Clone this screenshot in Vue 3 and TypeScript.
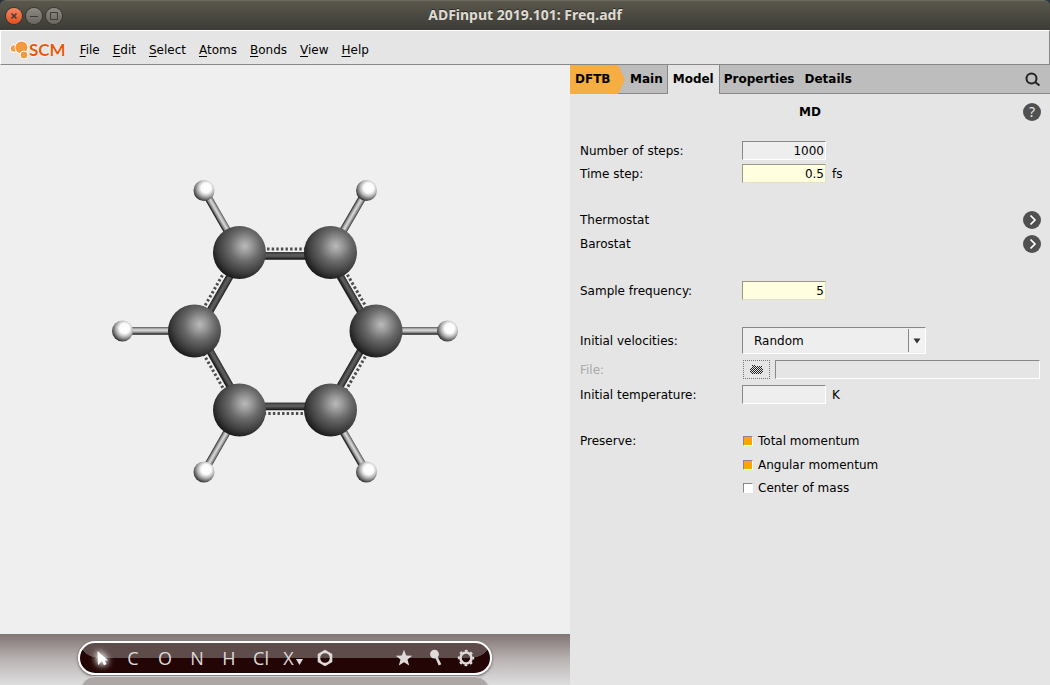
<script setup lang="ts">
import { ref } from 'vue'

interface Point { x: number; y: number }
interface Line { x1: number; y1: number; x2: number; y2: number }

const menus = ['File', 'Edit', 'Select', 'Atoms', 'Bonds', 'View', 'Help']
const elements = ['C', 'O', 'N', 'H', 'Cl']

const steps = ref('1000')
const timeStep = ref('0.5')
const sampleFrequency = ref('5')
const velocities = ref('Random')
const velocityFile = ref('')
const temperature = ref('')
const preserve = ref([
  { label: 'Total momentum', on: true },
  { label: 'Angular momentum', on: true },
  { label: 'Center of mass', on: false },
])

const centre: Point = { x: 285, y: 331 }
const carbons: Point[] = [
  { x: 239.5, y: 252.5 },
  { x: 330.5, y: 252.5 },
  { x: 376, y: 331 },
  { x: 330.5, y: 410 },
  { x: 239.5, y: 410 },
  { x: 194.5, y: 331 },
]
const hydrogens: Point[] = [
  { x: 204, y: 190.5 },
  { x: 366.5, y: 190.5 },
  { x: 447.5, y: 331 },
  { x: 366.5, y: 472 },
  { x: 204, y: 472 },
  { x: 122.5, y: 331 },
]

function shifted(a: Point, b: Point, amount: number): Line {
  const mx = (a.x + b.x) / 2 - centre.x
  const my = (a.y + b.y) / 2 - centre.y
  const length = Math.hypot(mx, my)
  const dx = (mx / length) * amount
  const dy = (my / length) * amount
  return { x1: a.x + dx, y1: a.y + dy, x2: b.x + dx, y2: b.y + dy }
}

const ring = carbons.map((a, i) => {
  const b = carbons[(i + 1) % carbons.length]
  return { solid: shifted(a, b, -3.5), dots: shifted(a, b, 3.5) }
})
const arms: Line[] = carbons.map((c, i) => ({ x1: c.x, y1: c.y, x2: hydrogens[i].x, y2: hydrogens[i].y }))
</script>

<template>
  <div class="window">
    <header class="titlebar">
      <div class="controls">
        <button class="control close" aria-label="Close">
          <svg viewBox="0 0 16 16"><path d="M5.500 5.500l5 5M10.500 5.500l-5 5" /></svg>
        </button>
        <button class="control" aria-label="Minimize">
          <svg viewBox="0 0 16 16"><path d="M4 8.500h8" /></svg>
        </button>
        <button class="control" aria-label="Maximize">
          <svg viewBox="0 0 16 16"><path d="M4.500 4.500h7v7h-7z" /></svg>
        </button>
      </div>
      <h1>ADFinput 2019.101: Freq.adf</h1>
    </header>

    <nav class="menubar">
      <a href="#" class="logo" aria-label="SCM">
        <svg class="bubbles" viewBox="0 0 19 20">
          <g stroke="#fff" stroke-width="1" fill="#f39a3f">
            <circle cx="4" cy="8.500" r="3.800" />
            <circle cx="11.500" cy="7.500" r="6.500" />
            <circle cx="14" cy="15" r="4" />
          </g>
        </svg>
        <span>SCM</span>
      </a>
      <button v-for="m in menus" :key="m" class="menu"><u>{{ m[0] }}</u>{{ m.slice(1) }}</button>
    </nav>

    <main class="content">
      <section class="viewer">
        <svg class="molecule" viewBox="0 65 570 569" role="img" aria-label="Benzene">
          <defs>
            <radialGradient id="carbon" cx="0.6" cy="0.38" r="0.66">
              <stop offset="0" stop-color="#bababa" />
              <stop offset="0.18" stop-color="#9c9c9c" />
              <stop offset="0.45" stop-color="#696969" />
              <stop offset="0.78" stop-color="#3c3c3c" />
              <stop offset="1" stop-color="#161616" />
            </radialGradient>
            <radialGradient id="hydrogen" cx="0.6" cy="0.38" r="0.66">
              <stop offset="0" stop-color="#fff" />
              <stop offset="0.36" stop-color="#fbfbfb" />
              <stop offset="0.6" stop-color="#b8b8b8" />
              <stop offset="0.82" stop-color="#6c6c6c" />
              <stop offset="1" stop-color="#262626" />
            </radialGradient>
          </defs>
          <g v-for="(b, i) in ring" :key="'r' + i">
            <line v-bind="b.dots" class="dots" />
            <line v-bind="b.solid" stroke="#1c1c1c" stroke-width="7.500" />
            <g transform="translate(0.500 -0.700)">
              <line v-bind="b.solid" stroke="#3e3e3e" stroke-width="6" />
              <line v-bind="b.solid" stroke="#5a5a5a" stroke-width="3" />
            </g>
          </g>
          <g v-for="(b, i) in arms" :key="'a' + i">
            <line v-bind="b" stroke="#262626" stroke-width="7.500" />
            <g transform="translate(0.500 -0.700)">
              <line v-bind="b" stroke="#717171" stroke-width="6.500" />
              <line v-bind="b" stroke="#a5a5a5" stroke-width="4.500" />
              <line v-bind="b" stroke="#d2d2d2" stroke-width="2" />
            </g>
          </g>
          <circle v-for="(c, i) in carbons" :key="'c' + i" :cx="c.x" :cy="c.y" r="26.500" fill="url(#carbon)" />
          <circle v-for="(h, i) in hydrogens" :key="'h' + i" :cx="h.x" :cy="h.y" r="10.500" fill="url(#hydrogen)" />
        </svg>

        <div class="dock">
          <div class="pill">
            <button class="tool" aria-label="Select tool">
              <svg class="cursor" viewBox="0 0 32 30">
                <path d="M12.500 8l10.500 9.500-5.500 0-4.500 4.500z" />
                <path d="M16 16l2.500-1 3 6-2.500 1.200z" />
              </svg>
            </button>
            <button v-for="e in elements" :key="e" class="tool">{{ e }}</button>
            <button class="tool other">X<svg viewBox="0 0 7 6"><path d="M0 0h7L3.500 6z" /></svg></button>
            <button class="tool" aria-label="Structures">
              <svg class="icon" viewBox="0 0 18 18">
                <path fill-rule="evenodd" d="M9 .8l7.300 4.100v8.200L9 17.200 1.700 13.100V4.900zM9 4.200a4.800 4.800 0 1 0 0 9.600A4.800 4.800 0 1 0 9 4.200z" />
              </svg>
            </button>
            <span class="spacer"></span>
            <button class="tool small" aria-label="Favorites">
              <svg class="icon" viewBox="0 0 18 18"><path d="M9 .8l2.200 5.700 6.100.3-4.800 3.800 1.700 6L9 13.200l-5.200 3.400 1.700-6L.7 6.800l6.100-.3z" /></svg>
            </button>
            <button class="tool small" aria-label="Pin">
              <svg class="icon" viewBox="0 0 18 18"><circle cx="8.500" cy="5.200" r="4.400" /><path d="M9 8l2.200-1 4.100 8.200-2.600 1.300z" /></svg>
            </button>
            <button class="tool small" aria-label="Settings">
              <svg class="icon" viewBox="0 0 18 18">
                <circle class="gear" cx="9" cy="9" r="5.500" stroke-width="2.600" />
                <circle class="gear" cx="9" cy="9" r="7.200" stroke-width="2" stroke-dasharray="2.700 2.955" stroke-dashoffset="1.350" />
              </svg>
            </button>
          </div>
          <div class="reflection"></div>
        </div>
      </section>

      <section class="panel">
        <div class="tabs">
          <button class="tab dftb">DFTB</button>
          <button class="tab">Main</button>
          <button class="tab active">Model</button>
          <button class="tab">Properties</button>
          <button class="tab">Details</button>
          <button class="search" aria-label="Search">
            <svg viewBox="0 0 16 16"><circle cx="6.500" cy="6.500" r="5" /><path d="M10 10l4.500 3.500" /></svg>
          </button>
        </div>

        <form class="form" @submit.prevent>
          <div class="heading">
            <h2>MD</h2>
            <button type="button" class="round help" aria-label="Help">?</button>
          </div>

          <div class="group">
            <div class="row">
              <label for="steps">Number of steps:</label>
              <input id="steps" v-model="steps" class="field" />
            </div>
            <div class="row">
              <label for="step">Time step:</label>
              <input id="step" v-model="timeStep" class="field changed" />
              <span class="unit">fs</span>
            </div>
          </div>

          <div class="group links">
            <div v-for="name in ['Thermostat', 'Barostat']" :key="name" class="row">
              <span>{{ name }}</span>
              <button type="button" class="round" :aria-label="name">
                <svg viewBox="0 0 18 18"><path d="M7.500 4.500L12 9l-4.500 4.500" /></svg>
              </button>
            </div>
          </div>

          <div class="group">
            <div class="row">
              <label for="sample">Sample frequency:</label>
              <input id="sample" v-model="sampleFrequency" class="field changed" />
            </div>
          </div>

          <div class="group initial">
            <div class="row">
              <label for="velocities">Initial velocities:</label>
              <div class="combo">
                <select id="velocities" v-model="velocities">
                  <option>Random</option>
                  <option>Zero</option>
                  <option>From file</option>
                </select>
                <span class="arrow"><svg viewBox="0 0 8 6"><path d="M.5.500h7L4 5.500z" /></svg></span>
              </div>
            </div>
            <div class="row">
              <label for="file" class="off">File:</label>
              <button type="button" class="browse" disabled aria-label="Browse">
                <svg viewBox="0 0 13 9">
                  <defs>
                    <pattern id="stipple" width="2" height="2" patternUnits="userSpaceOnUse">
                      <rect width="1" height="1" fill="#222" />
                      <rect x="1" y="1" width="1" height="1" fill="#222" />
                    </pattern>
                  </defs>
                  <path d="M2 0h4v1h6v2h1v5h-1v1H1V7H0V3h2z" fill="url(#stipple)" />
                </svg>
              </button>
              <input id="file" v-model="velocityFile" class="field path" disabled />
            </div>
            <div class="row">
              <label for="temperature">Initial temperature:</label>
              <input id="temperature" v-model="temperature" class="field" />
              <span class="unit">K</span>
            </div>
          </div>

          <fieldset class="group preserve">
            <legend>Preserve:</legend>
            <label v-for="p in preserve" :key="p.label" class="check">
              <input v-model="p.on" type="checkbox" />{{ p.label }}
            </label>
          </fieldset>
        </form>
      </section>
    </main>
  </div>
</template>

<style>
body {
  margin: 0;
  background: #2a3340;
}
</style>

<style scoped>
* {
  box-sizing: border-box;
}

.window {
  display: flex;
  flex-direction: column;
  min-height: 100vh;
  color: #000;
  font: 12px/16px "DejaVu Sans", sans-serif;
}

button,
input,
select {
  margin: 0;
  padding: 0;
  border: 0;
  background: none;
  color: inherit;
  font: inherit;
}

svg {
  display: block;
}

.titlebar {
  display: grid;
  grid-template-columns: 1fr auto 1fr;
  align-items: center;
  height: 30px;
  padding: 0 6px;
  border-radius: 6px 6px 0 0;
  border-top: 1px solid #6b685c;
  background: linear-gradient(#5a584c, #3c3b37);
}

.titlebar h1 {
  margin: 0;
  padding-bottom: 2px;
  color: #dfdbd2;
  font: bold 14px/20px "Noto Sans", sans-serif;
  text-shadow: 0 -1px 0 #2c2b27;
}

.controls {
  display: flex;
  gap: 4px;
}

.control {
  width: 16px;
  height: 16px;
  border-radius: 50%;
  background: linear-gradient(#8c8a82, #68665e);
  box-shadow: 0 0 0 1px #36352f;
}

.control svg {
  fill: none;
  stroke: #3c3b37;
  stroke-width: 1;
}

.control.close {
  background: linear-gradient(#f58663, #e5501d);
}

.control.close svg {
  stroke-width: 1.500;
}

.menubar {
  display: flex;
  gap: 1px;
  align-items: center;
  height: 35px;
  padding: 5px 9px 0;
  border: 1px solid;
  border-color: #fff #888 #888 #fff;
  background: #e5e5e5;
}

.logo {
  display: flex;
  align-items: center;
  margin-right: 7px;
  color: #e8590c;
  font: bold 17px/20px Lato, sans-serif;
  text-decoration: none;
  text-shadow: 0 0 1px #fff, 0 0 2px #fff;
}

.bubbles {
  width: 19px;
  height: 20px;
}

.menu {
  padding: 0 6px;
}

.menu u {
  text-underline-offset: 2px;
}

.content {
  display: grid;
  flex: 1;
  grid-template-columns: minmax(0, 1fr) 480px;
}

.viewer {
  display: flex;
  flex-direction: column;
  background: #efefef;
}

.molecule {
  flex: 1;
  width: 100%;
  min-height: 0;
}

.dots {
  stroke: #4c4c4c;
  stroke-width: 3;
  stroke-dasharray: 2.400 2.200;
}

.dock {
  display: flex;
  flex-direction: column;
  align-items: center;
  gap: 1px;
  height: 51px;
  padding-top: 7px;
  overflow: hidden;
  background: linear-gradient(#807573, #b9b4b3 50%, #dedede);
}

.pill {
  display: flex;
  align-items: center;
  flex: none;
  height: 34px;
  padding: 0 9px 0 5px;
  border: 2px solid #fff;
  border-radius: 17px;
  background:
    radial-gradient(ellipse 20px 15px at 20px 0, #5e4c4b 98%, #240505) 0 0 / 20px 15px no-repeat,
    radial-gradient(ellipse 20px 15px at 0 0, #5e4c4b 98%, #240505) 100% 0 / 20px 15px no-repeat,
    linear-gradient(#5e4c4b 50%, #240505 50%);
  box-shadow: 0 1px 3px #5a5050;
}

.tool {
  display: flex;
  align-items: center;
  justify-content: center;
  width: 32px;
  height: 30px;
  color: #dedad9;
  font: 18px/30px "Open Sans", sans-serif;
}

.tool svg {
  fill: #dedad9;
}

.tool .gear {
  fill: none;
  stroke: #dedad9;
}

.small {
  width: 31px;
}

.icon {
  width: 18px;
  height: 18px;
}

.cursor {
  width: 32px;
  height: 30px;
  filter: drop-shadow(0 0 3px #fff) drop-shadow(0 0 3px #b9adad);
}

.tool .cursor {
  fill: #fff;
}

.other svg {
  width: 7px;
  height: 6px;
  margin: 8px 0 0 2px;
}

.spacer {
  width: 47px;
}

.reflection {
  flex: none;
  width: 410px;
  height: 30px;
  border: 1px solid #d4d2d2;
  border-radius: 15px;
  background: #aca7a6;
}

.panel {
  background: #e5e5e5;
}

.tabs {
  display: flex;
  height: 29px;
  background: #bdbdbd;
  box-shadow: inset 0 -1px #888;
}

.tab {
  padding: 0 5px 2px;
  font-weight: bold;
}

.dftb {
  width: 55px;
  background: #f6ad42;
  clip-path: polygon(0 0, 48px 0, 100% 50%, 48px 100%, 0 100%);
  text-align: left;
}

.active {
  margin: 0 -1px;
  border: 1px solid #888;
  border-width: 0 1px;
  background: #e5e5e5;
}

.search {
  width: 16px;
  margin: 0 9px 0 auto;
}

.search svg {
  width: 16px;
  height: 16px;
  fill: none;
  stroke: #222;
  stroke-width: 2;
}

.form {
  display: flex;
  flex-direction: column;
  gap: 27px;
  padding: 9px 10px;
}

.heading {
  display: grid;
  grid-template-columns: 1fr auto 1fr;
  align-items: center;
  height: 18px;
  margin-bottom: -7px;
}

.heading h2 {
  grid-column: 2;
  margin: 0;
  font-size: 12px;
}

.round {
  width: 18px;
  height: 18px;
  margin: 0 -1px 0 auto;
  border-radius: 50%;
  background: #505050;
  color: #e5e5e5;
}

.round svg {
  fill: none;
  stroke: #fff;
  stroke-width: 1.700;
}

.help {
  font: 14px/18px "Noto Sans", sans-serif;
}

.group {
  display: flex;
  flex-direction: column;
  gap: 4px;
}

.initial {
  gap: 6px;
}

.row {
  display: flex;
  align-items: center;
}

.row > label {
  width: 162px;
}

.off {
  color: #a9a9a9;
}

.links .row {
  height: 20px;
}

.field {
  width: 84px;
  height: 19px;
  padding: 0 1px;
  border: 1px solid;
  border-color: #888 #fff #fff #888;
  background: #eee;
  text-align: right;
}

.changed {
  border-color: #999985 #e2e2c8 #e2e2c8 #999985;
  background: #ffffe0;
}

.path {
  flex: 1;
  background: #e5e5e5;
}

.unit {
  margin-left: 6px;
}

.combo {
  position: relative;
  width: 184px;
  height: 27px;
  border: 1px solid;
  border-color: #888 #fff #fff #888;
  background: #eee;
}

.combo select {
  width: 100%;
  height: 25px;
  padding: 0 18px 0 11px;
  appearance: none;
}

.arrow {
  position: absolute;
  inset: 1px 0 1px auto;
  display: grid;
  place-items: center;
  width: 17px;
  border-left: 1px solid #888;
  background: #f2f2f2;
  pointer-events: none;
}

.arrow svg {
  width: 8px;
  height: 6px;
  fill: #333;
}

.browse {
  display: grid;
  place-items: center;
  width: 27px;
  height: 19px;
  margin: 0 5px 0 1px;
  border: 1px dotted #777;
}

.browse svg {
  width: 13px;
  height: 9px;
}

.preserve {
  display: grid;
  grid-template-columns: 162px 1fr;
  gap: 4px 0;
  margin: 0;
  padding: 0;
  border: 0;
}

.preserve legend {
  float: left;
  grid-column: 1;
  grid-row: 1;
  padding: 0;
  line-height: 20px;
}

.check {
  display: flex;
  grid-column: 2;
  align-items: center;
  gap: 5px;
  height: 19px;
}

.check input {
  width: 10px;
  height: 10px;
  margin-left: 1px;
  border: 1px solid;
  border-color: #888 #fff #fff #888;
  background: #fff;
  appearance: none;
}

.check input:checked {
  background: #ffa500;
}
</style>
